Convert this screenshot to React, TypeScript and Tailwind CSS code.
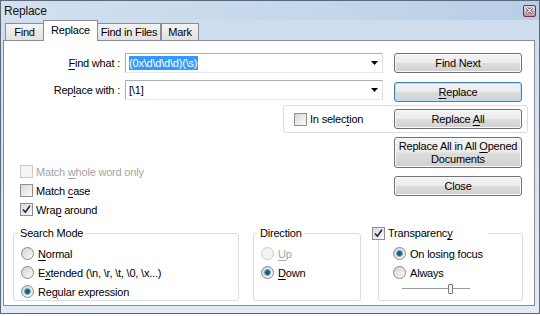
import React from "react";

const FONT = "font-['Liberation_Sans',Arial,sans-serif]";

function U({ children }: { children: React.ReactNode }) {
  return <span className="underline underline-offset-[2px] decoration-[1px]">{children}</span>;
}

function CheckBox({ checked, disabled }: { checked?: boolean; disabled?: boolean }) {
  return (
    <span
      className={`relative inline-flex items-center justify-center w-[13px] h-[13px] shrink-0 border ${
        disabled
          ? "border-[#c9c9c9] bg-[#f5f5f5]"
          : "border-[#8e8f8f] bg-gradient-to-br from-[#d8d8d8] to-[#fbfbfb]"
      }`}
    >
      {checked && (
        <svg width="11" height="11" viewBox="0 0 11 11">
          <path d="M2 5.5 L4.4 8.2 L9 1.8" stroke="#1d2d52" strokeWidth="1.7" fill="none" />
        </svg>
      )}
    </span>
  );
}

function Radio({ checked, disabled }: { checked?: boolean; disabled?: boolean }) {
  return (
    <span
      className={`relative inline-flex items-center justify-center w-[13px] h-[13px] rounded-full shrink-0 border ${
        disabled
          ? "border-[#cacaca] bg-[#f3f3f3]"
          : "border-[#8a8a8a] bg-gradient-to-br from-[#d2d2d2] to-[#fbfbfb]"
      }`}
    >
      {checked && (
        <span className="w-[7px] h-[7px] rounded-full bg-[#1f5b75] border border-[#6fb2d4]" />
      )}
    </span>
  );
}

function Btn({
  children,
  focused,
  className,
}: {
  children: React.ReactNode;
  focused?: boolean;
  className?: string;
}) {
  return (
    <div
      className={`flex items-center justify-center text-center rounded-[3px] border bg-[linear-gradient(#f3f3f3_0%,#ebebeb_48%,#dddddd_52%,#d0d0d0_100%)] ${
        focused
          ? "border-[#3c7fb1] shadow-[inset_0_0_0_1px_#b9e2f6]"
          : "border-[#707070] shadow-[inset_0_0_0_1px_#fbfbfb]"
      } ${className ?? ""}`}
    >
      {children}
    </div>
  );
}

function Arrow() {
  return (
    <svg className="ml-auto mr-[4px]" width="7" height="4" viewBox="0 0 7 4">
      <path d="M0 0 H7 L3.5 4 Z" fill="#000" />
    </svg>
  );
}

function Tab({
  children,
  selected,
  className,
}: {
  children: React.ReactNode;
  selected?: boolean;
  className?: string;
}) {
  return (
    <div
      className={`flex items-center justify-center border border-b-0 border-[#898c95] ${
        selected
          ? "relative z-10 h-[21px] -mb-[1px] bg-white pb-[2px]"
          : "h-[17px] bg-gradient-to-b from-[#f3f3f3] to-[#e2e2e2]"
      } ${className ?? ""}`}
    >
      {children}
    </div>
  );
}

export default function App() {
  return (
    <div className="w-[540px] h-[316px] bg-white overflow-hidden">
      <div
        className={`w-[540px] h-[314px] border border-[#59697b] bg-gradient-to-b from-[#cddcee] to-[#e2ebf5] flex flex-col ${FONT} text-[11px] leading-[14px] text-black tracking-[-0.2px]`}
      >
        {/* Title bar */}
        <div className="h-[19px] shrink-0 flex items-center pl-[3px] pr-[3px] bg-gradient-to-r from-[#d3e1f0] via-[#c6d8ec] to-[#b8cee7]">
          <span className="text-[12px] text-[#141414]">Replace</span>
          <div className="ml-auto w-[13px] h-[12px] rounded-[2px] border border-[#6d3546] bg-gradient-to-b from-[#e9d8de] to-[#b596a2] flex items-center justify-center">
            <svg width="7" height="7" viewBox="0 0 7 7">
              <path d="M1 1 L6 6 M6 1 L1 6" stroke="#3e1a24" strokeWidth="2.4" />
              <path d="M1 1 L6 6 M6 1 L1 6" stroke="#ffffff" strokeWidth="1.2" />
            </svg>
          </div>
        </div>

        <div className="flex-1 flex flex-col pl-[2px] pr-[4px]">
          {/* Tabs */}
          <div className="h-[20px] shrink-0 flex items-end pl-[2px]">
            <Tab className="w-[39px]">Find</Tab>
            <Tab selected className="w-[55px] -ml-[1px]">
              Replace
            </Tab>
            <Tab className="w-[64px] -ml-[1px]">Find in Files</Tab>
            <Tab className="w-[38px]">Mark</Tab>
          </div>

          {/* Panel */}
          <div className="h-[266px] bg-white border border-[#898c95] flex flex-col">
            {/* Row 1 */}
            <div className="mt-[12px] flex items-start">
              <div className="w-[116px] h-[20px] flex items-center justify-end">
                <span>
                  <U>F</U>ind what :
                </span>
              </div>
              <div className="ml-[5px] w-[258px] h-[20px] border border-[#abadb3] border-b-[#e3e9ef] border-r-[#dbdfe6] flex items-center pl-[3px]">
                <span className="bg-[#3399ff] text-white leading-[14px] pr-[1px]">
                  {"(0x\\d\\d\\d\\d)(\\s)"}
                </span>
                <Arrow />
              </div>
              <Btn className="ml-[11px] w-[128px] h-[20px]">Find Next</Btn>
            </div>

            {/* Row 2 */}
            <div className="mt-[7px] flex items-start">
              <div className="w-[116px] h-[20px] flex items-center justify-end">
                <span>
                  Rep<U>l</U>ace with :
                </span>
              </div>
              <div className="ml-[5px] w-[258px] h-[20px] border border-[#abadb3] border-b-[#e3e9ef] border-r-[#dbdfe6] flex items-center pl-[3px]">
                <span>{"[\\1]"}</span>
                <Arrow />
              </div>
              <Btn focused className="ml-[11px] mt-[2px] w-[128px] h-[20px]">
                <span>
                  <U>R</U>eplace
                </span>
              </Btn>
            </div>

            {/* Row 3: In selection group */}
            <div className="mt-[3px] flex">
              <div className="ml-[279px] w-[245px] h-[28px] rounded-[3px] border border-[#d5dfe5] flex items-center">
                <div className="ml-[10px] flex items-center gap-[3px]">
                  <CheckBox />
                  <span>
                    In selec<U>t</U>ion
                  </span>
                </div>
                <Btn className="ml-auto mr-[5px] w-[128px] h-[20px]">
                  <span>
                    Replace <U>A</U>ll
                  </span>
                </Btn>
              </div>
            </div>

            {/* Row 4 */}
            <div className="mt-[4px] flex items-start">
              <div className="ml-[16px] w-[374px] pt-[25px] flex flex-col">
                <div className="h-[19px] flex items-center gap-[3px] text-[#a3a3a3]">
                  <CheckBox disabled />
                  <span>
                    Match <U>w</U>hole word only
                  </span>
                </div>
                <div className="h-[19px] flex items-center gap-[3px]">
                  <CheckBox />
                  <span>
                    Match <U>c</U>ase
                  </span>
                </div>
                <div className="h-[19px] flex items-center gap-[3px]">
                  <CheckBox checked />
                  <span>
                    Wra<U>p</U> around
                  </span>
                </div>
              </div>
              <div className="w-[128px] flex flex-col">
                <Btn className="h-[31px] leading-[13px]">
                  <span>
                    Replace All in All <U>O</U>pened
                    <br />
                    Documents
                  </span>
                </Btn>
                <Btn className="mt-[8px] h-[20px]">Close</Btn>
              </div>
            </div>

            {/* Row 5: group boxes */}
            <div className="mt-[7px] flex items-start">
              <fieldset className="ml-[9px] w-[226px] h-[75px] rounded-[3px] border border-[#d5dfe5]">
                <legend className="ml-[4px] px-[2px] leading-[14px]">Search Mode</legend>
                <div className="mt-[4px] pl-[7px] flex flex-col">
                  <div className="h-[19px] flex items-center gap-[4px]">
                    <Radio />
                    <span>
                      <U>N</U>ormal
                    </span>
                  </div>
                  <div className="h-[19px] flex items-center gap-[4px]">
                    <Radio />
                    <span>
                      E<U>x</U>tended {"(\\n, \\r, \\t, \\0, \\x...)"}
                    </span>
                  </div>
                  <div className="h-[19px] flex items-center gap-[4px]">
                    <Radio checked />
                    <span>
                      Re<U>g</U>ular expression
                    </span>
                  </div>
                </div>
              </fieldset>

              <fieldset className="ml-[14px] w-[108px] h-[75px] rounded-[3px] border border-[#d5dfe5]">
                <legend className="ml-[4px] px-[2px] leading-[14px]">Direction</legend>
                <div className="mt-[4px] pl-[7px] flex flex-col">
                  <div className="h-[19px] flex items-center gap-[4px] text-[#a3a3a3]">
                    <Radio disabled />
                    <span>
                      <U>U</U>p
                    </span>
                  </div>
                  <div className="h-[19px] flex items-center gap-[4px]">
                    <Radio checked />
                    <span>
                      <U>D</U>own
                    </span>
                  </div>
                </div>
              </fieldset>

              <fieldset className="ml-[17px] w-[145px] h-[75px] rounded-[3px] border border-[#d5dfe5]">
                <legend className="-ml-[7px] w-[116px] h-[14px] bg-white flex items-center gap-[3px]">
                  <CheckBox checked />
                  <span>
                    Transparenc<U>y</U>
                  </span>
                </legend>
                <div className="mt-[4px] pl-[14px] flex flex-col">
                  <div className="h-[19px] flex items-center gap-[4px]">
                    <Radio checked />
                    <span>On losing focus</span>
                  </div>
                  <div className="h-[19px] flex items-center gap-[4px]">
                    <Radio />
                    <span>Always</span>
                  </div>
                  <div className="relative ml-[9px] mt-[2px] w-[68px] h-[10px]">
                    <div className="absolute left-0 right-0 top-[4px] h-[2px] border-t border-[#9a9a9a] border-b border-b-white bg-[#e6e6e6]" />
                    <div className="absolute left-[46px] top-0 w-[5px] h-[10px] rounded-[1px] border border-[#7a7a7a] bg-[#f2f2f2]" />
                  </div>
                </div>
              </fieldset>
            </div>
          </div>
        </div>
      </div>
    </div>
  );
}
